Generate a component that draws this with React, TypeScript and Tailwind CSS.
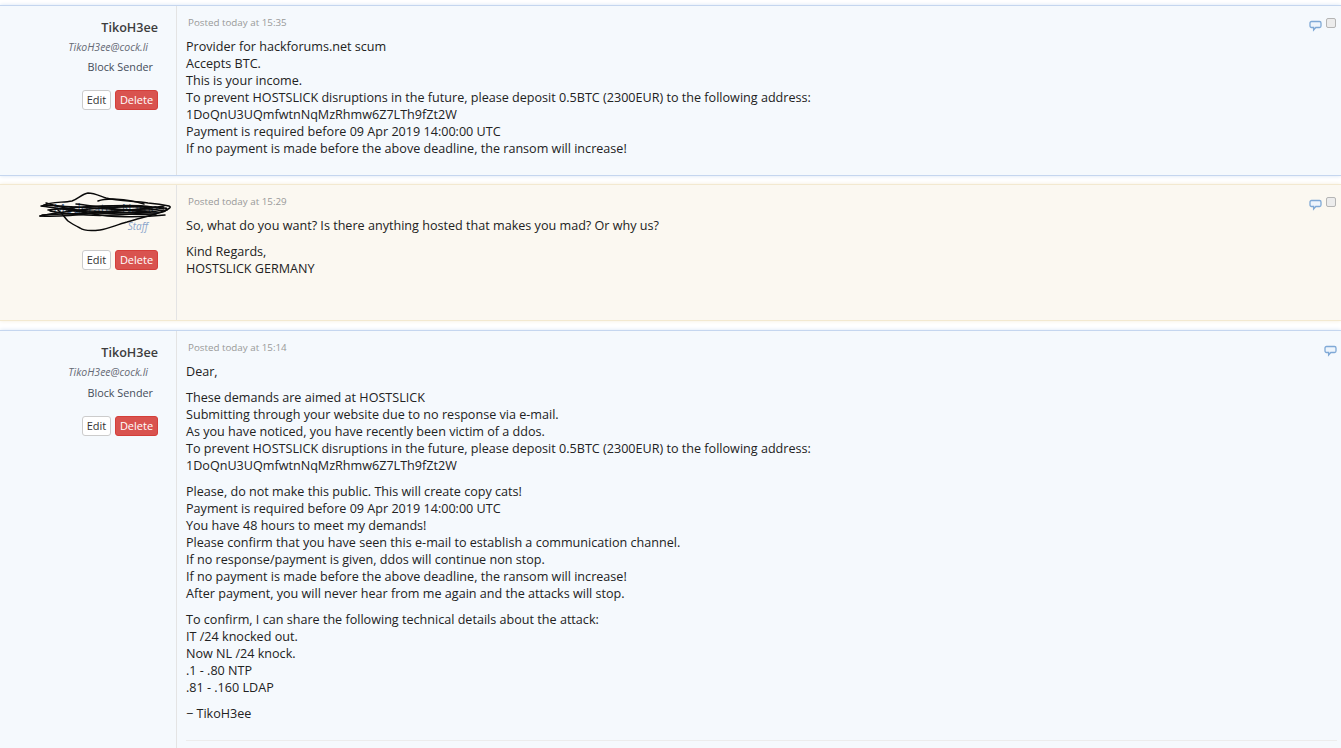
const blue = "bg-[#f5f9fd] border-[#c5d6ef] shadow-[0_0_4px_#d8e5f5]";
const cream = "bg-[#fbf8f1] border-[#f3e9d0] shadow-[0_0_4px_#f5eedc]";

function CommentIcon() {
  return (
    <svg width="13" height="12" viewBox="0 0 13 12" className="block">
      <path
        d="M2.500 1.500h8a1.500 1.500 0 0 1 1.500 1.500v3a1.500 1.500 0 0 1-1.500 1.500H6.800L4.600 10V7.500H2.500a1.500 1.500 0 0 1-1.500-1.500V3a1.500 1.500 0 0 1 1.500-1.500z"
        fill="#eef5fc"
        stroke="#7fa9d6"
        strokeWidth="1.300"
      />
    </svg>
  );
}

// the black pen scribble that hides the staff name
function Scribble() {
  return (
    <svg width="136" height="46" viewBox="0 0 136 46" fill="none" className="absolute left-[36px] top-[6px]">
      <g stroke="#0a0a0a" strokeWidth="1.500" strokeLinecap="round" strokeLinejoin="round">
        <path d="M6 15C16 10 26 12 36 10C42 8 46 3 52 2C58 2 64 5 70 7C82 10 96 10 112 12C122 13 128 14 133 15C136 16 133 18 128 20C118 24 104 27 91 31C80 34 72 38 64 39C56 40 48 40 44 37C40 35 36 33 32 30C29 27 26 22 22 19" />
        <path d="M5 15c14 2 32 4 52 8 16 3 46 4 72 1M4 25c30-6 82-12 124-8 2 0 3 1 3 2" />
        <path d="M8 14c30 2 66 4 106 7M6 24c30-1 72-4 114-2 6 0 12-2 10-5" />
        <path d="M10 12c24 8 60 12 110 4M14 20c30 6 72 6 114-1M12 19c28-3 70-6 104-2" />
        <path d="M30 18c18 3 50 6 90 5M40 13c22 2 58 10 88 4M50 16c22-1 46-3 66 0M62 10c8-3 26-3 46 3" />
        <path d="M4 25c16 1 38-1 54-3 22-3 50-3 70-7" />
      </g>
    </svg>
  );
}

function Post({
  name,
  email,
  blockClass,
  staff,
  time,
  tone,
  check,
  mainClass,
  children,
}: {
  name?: string;
  email?: string;
  blockClass?: string;
  staff?: boolean;
  time: string;
  tone: string;
  check?: boolean;
  mainClass: string;
  children: React.ReactNode;
}) {
  return (
    <div className={`flex border-y ${tone} ${mainClass}`}>
      <div className="relative w-[177px] shrink-0 border-r border-[#e4e4e4] pr-[18px] text-right">
        {staff ? (
          <>
            <div className="pt-[13px] text-[13px] font-medium leading-[20px] whitespace-nowrap text-[#4a6a90]">
              Moderator Name
            </div>
            <div className="mt-[1px] h-[14px] pr-[10px] text-[10px] italic leading-[14px] text-[#8ba5cc]">Staff</div>
            <Scribble />
          </>
        ) : (
          <>
            <div className="pt-[12px] text-[12.600px] font-semibold leading-[20px] text-[#3d3d3d]">{name}</div>
            <div className="mt-[2px] pr-[10px] text-[10.500px] italic leading-[14px] text-[#666a75]">{email}</div>
          </>
        )}
        {blockClass && <div className={`${blockClass} pr-[5px] text-[10.800px] leading-[14px] text-[#444c5a]`}>Block Sender</div>}
        <div className={`flex justify-end gap-[4px] ${blockClass ? "mt-[16px]" : "mt-[17px]"}`}>
          <span className="h-[20px] w-[29px] rounded-[3px] border border-[#cccccc] bg-white text-center text-[11px] leading-[18px] text-[#333333]">
            Edit
          </span>
          <span className="h-[20px] w-[43px] rounded-[3px] border border-[#d43f3a] bg-[#d9534f] text-center text-[11px] leading-[18px] text-white">
            Delete
          </span>
        </div>
      </div>
      <div className="min-w-0 flex-1 pl-[9px] pr-[4px]">
        <div className="flex justify-between">
          <div className="pl-[2px] pt-[11px] text-[9.800px] leading-[12px] text-[#999999]">{time}</div>
          <div className="flex items-start gap-[4px] pt-[10px]">
            <div className="mt-[4px]">
              <CommentIcon />
            </div>
            {check && <div className="mt-[2px] mr-[1px] h-[10px] w-[10px] rounded-[2px] border border-[#b5b5b5] bg-[#ececec]" />}
          </div>
        </div>
        {children}
      </div>
    </div>
  );
}

function Para({ lines, last }: { lines: string[]; last?: boolean }) {
  return (
    <p className={`text-[12.600px] leading-[17px] text-[#222222] ${last ? "" : "mb-[9px]"}`}>
      {lines.map((l) => (
        <span key={l} className="block whitespace-nowrap">
          {l}
        </span>
      ))}
    </p>
  );
}

export default function App() {
  return (
    <div className="h-[748px] overflow-hidden bg-white pt-[5px] font-['Open_Sans',sans-serif]">
      <Post name="TikoH3ee" email="TikoH3ee@cock.li" blockClass="mt-[6px]" time="Posted today at 15:35" tone={blue} check mainClass="h-[171px]">
        <div className="pt-[6px]">
          <Para
            last
            lines={[
              "Provider for hackforums.net scum",
              "Accepts BTC.",
              "This is your income.",
              "To prevent HOSTSLICK disruptions in the future, please deposit 0.5BTC (2300EUR) to the following address:",
              "1DoQnU3UQmfwtnNqMzRhmw6Z7LTh9fZt2W",
              "Payment is required before 09 Apr 2019 14:00:00 UTC",
              "If no payment is made before the above deadline, the ransom will increase!",
            ]}
          />
        </div>
      </Post>
      <div className="h-[8px]" />
      <Post staff time="Posted today at 15:29" tone={cream} check mainClass="h-[137px]">
        <div className="pt-[6px]">
          <Para lines={["So, what do you want? Is there anything hosted that makes you mad? Or why us?"]} />
          <Para last lines={["Kind Regards,", "HOSTSLICK GERMANY"]} />
        </div>
      </Post>
      <div className="h-[9px]" />
      <Post name="TikoH3ee" email="TikoH3ee@cock.li" blockClass="mt-[7px]" time="Posted today at 15:14" tone={blue} mainClass="h-[440px]">
        <div className="pt-[6px]">
          <Para lines={["Dear,"]} />
          <Para
            lines={[
              "These demands are aimed at HOSTSLICK",
              "Submitting through your website due to no response via e-mail.",
              "As you have noticed, you have recently been victim of a ddos.",
              "To prevent HOSTSLICK disruptions in the future, please deposit 0.5BTC (2300EUR) to the following address:",
              "1DoQnU3UQmfwtnNqMzRhmw6Z7LTh9fZt2W",
            ]}
          />
          <Para
            lines={[
              "Please, do not make this public. This will create copy cats!",
              "Payment is required before 09 Apr 2019 14:00:00 UTC",
              "You have 48 hours to meet my demands!",
              "Please confirm that you have seen this e-mail to establish a communication channel.",
              "If no response/payment is given, ddos will continue non stop.",
              "If no payment is made before the above deadline, the ransom will increase!",
              "After payment, you will never hear from me again and the attacks will stop.",
            ]}
          />
          <Para
            lines={[
              "To confirm, I can share the following technical details about the attack:",
              "IT /24 knocked out.",
              "Now NL /24 knock.",
              ".1 - .80 NTP",
              ".81 - .160 LDAP",
            ]}
          />
          <Para last lines={["− TikoH3ee"]} />
          <div className="mt-[18px] border-t border-[#ececec]" />
        </div>
      </Post>
    </div>
  );
}
